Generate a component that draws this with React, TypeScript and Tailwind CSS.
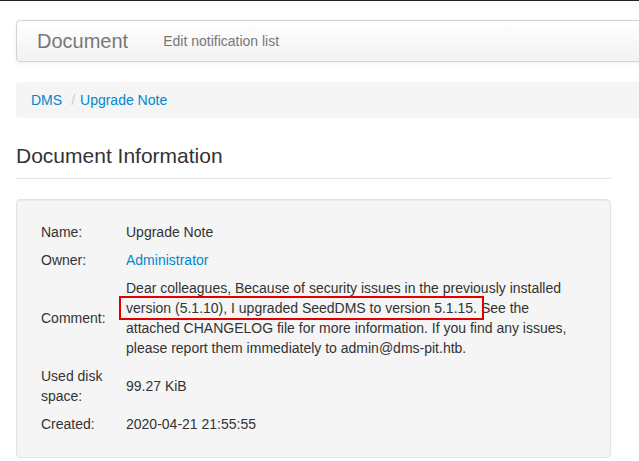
import React from "react";

const rows = [
  { label: "Name:", value: "Upgrade Note" },
  { label: "Owner:", value: "Administrator", link: true },
];

export default function App() {
  return (
    <div className="w-[639px] h-[461px] overflow-hidden bg-white text-[14px] leading-[20px] text-[#333] font-['Liberation_Sans',Arial,sans-serif]">
      {/* fixed top bar edge */}
      <div className="h-px bg-[#222] shadow-[0_1px_8px_rgba(0,0,0,0.18)]" />

      <div className="pl-4 pt-[19px]">
        <div className="w-[700px] h-[42px] flex items-center rounded-[4px] border border-[#d4d4d4] bg-gradient-to-b from-white to-[#f2f2f2] shadow-[0_1px_4px_rgba(0,0,0,0.065)]">
          <span className="pl-5 text-[20px] text-[#777]">Document</span>
          <span className="pl-[35px] text-[#777]">Edit notification list</span>
        </div>

        <div className="mt-5 w-[700px] h-9 flex items-center px-[15px] rounded-[4px] bg-[#f5f5f5]">
          <span className="text-[#0088cc]">DMS</span>
          <span className="pl-[9px] pr-[5px] text-[#ccc]">/</span>
          <span className="text-[#0088cc]">Upgrade Note</span>
        </div>

        <div className="mt-5 w-[595px]">
          <div className="h-[41px] pb-1 leading-[36px] text-[21px] text-[#333] border-b border-[#e5e5e5]">
            Document Information
          </div>

          <div className="mt-5 rounded-[4px] border border-[#e3e3e3] bg-[#f5f5f5] px-[19px] pt-[18px] pb-[19px] shadow-[inset_0_1px_1px_rgba(0,0,0,0.05)]">
            <div className="grid grid-cols-[85px_1fr] items-center">
              {rows.map((r) => (
                <React.Fragment key={r.label}>
                  <div className="px-[5px] py-1">{r.label}</div>
                  <div className={`px-[5px] py-1 ${r.link ? "text-[#0088cc]" : ""}`}>{r.value}</div>
                </React.Fragment>
              ))}

              <div className="px-[5px] py-1">Comment:</div>
              <div className="px-[5px] py-1">
                Dear colleagues, Because of security issues in the previously installed{" "}
                <span className="whitespace-nowrap px-[3px] -mx-[3px] outline-2 outline-solid outline-[#e00000] outline-offset-[2px]">
                  version (5.1.10), I upgraded SeedDMS to version 5.1.15.
                </span>{" "}
                See the attached CHANGELOG file for more information. If you find any issues, please report them
                immediately to admin@dms-pit.htb.
              </div>

              <div className="px-[5px] py-1">Used disk space:</div>
              <div className="px-[5px] py-1">99.27 KiB</div>

              <div className="px-[5px] py-1">Created:</div>
              <div className="px-[5px] py-1">2020-04-21 21:55:55</div>
            </div>
          </div>
        </div>
      </div>
    </div>
  );
}
